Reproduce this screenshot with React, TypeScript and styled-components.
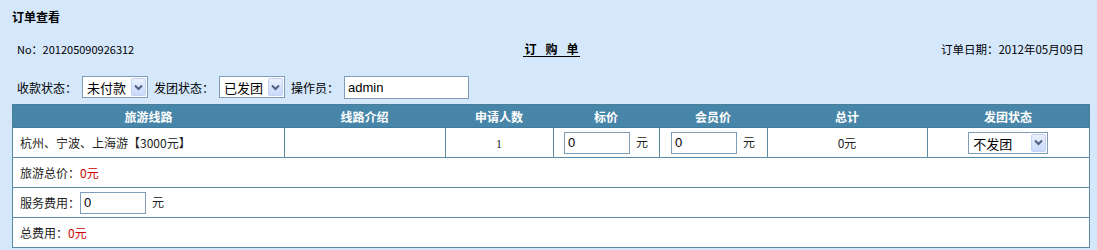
import React from "react";
import styled, { createGlobalStyle } from "styled-components";

const Global = createGlobalStyle`
  html, body {
    margin: 0;
    padding: 0;
    background: #d4e7fb;
  }
  body {
    font-family: "Noto Sans CJK SC", "Liberation Sans", sans-serif;
    font-size: 12px;
    color: #000;
  }
`;

const Page = styled.div`
  width: 1097px;
  height: 250px;
  overflow: hidden;
  padding: 8px 10px 0 12px;
  box-sizing: border-box;
`;

const Title = styled.div`
  font-weight: bold;
  font-size: 12px;
  line-height: 18px;
  height: 18px;
`;

const InfoRow = styled.div`
  display: grid;
  grid-template-columns: 1fr auto 1fr;
  align-items: center;
  height: 18px;
  margin-top: 14px;
  padding: 0 3px 0 5px;
`;

const OrderNo = styled.span`
  font-size: 11px;
`;

const OrderTitle = styled.span`
  display: inline-flex;
  gap: 9px;
  font-weight: bold;
  font-size: 12px;
  line-height: 15px;
  border-bottom: 1px solid #000;
  padding: 0 1px;
  margin-left: 2px;
`;

const OrderDate = styled.span`
  justify-self: end;
  font-size: 11.5px;
`;

const FilterRow = styled.div`
  display: flex;
  align-items: center;
  height: 24px;
  margin-top: 17px;
  padding-left: 5px;
`;

const Label = styled.span<{ $gap?: number }>`
  margin-left: ${(p) => p.$gap ?? 0}px;
  margin-right: 5px;
  white-space: nowrap;
`;

const SelectWrap = styled.span<{ $w: number }>`
  display: inline-flex;
  align-items: center;
  width: ${(p) => p.$w}px;
  height: 22px;
  box-sizing: border-box;
  border: 1px solid #7f9db9;
  background: #fff;
  padding: 1px;
`;

const NativeSelect = styled.select`
  appearance: none;
  -webkit-appearance: none;
  border: none;
  outline: none;
  background: transparent;
  flex: 1;
  min-width: 0;
  height: 100%;
  padding: 0 0 0 3px;
  font-family: "Noto Sans CJK SC", sans-serif;
  font-size: 13px;
  color: #000;
`;

const Arrow = styled.span`
  display: flex;
  align-items: center;
  justify-content: center;
  width: 15px;
  height: 18px;
  box-sizing: border-box;
  border: 1px solid #c3d3f3;
  border-radius: 2px;
  background: linear-gradient(#eaf0fd, #c9d9fb);
`;

const TextInput = styled.input<{ $w: number }>`
  width: ${(p) => p.$w}px;
  height: 22px;
  box-sizing: border-box;
  border: 1px solid #7f9db9;
  padding: 0 3px;
  font-family: "Liberation Sans", sans-serif;
  font-size: 13px;
  color: #000;
  background: #fff;
  outline: none;
`;

const Table = styled.table`
  width: 1076px;
  margin-top: 5px;
  border-collapse: collapse;
  table-layout: fixed;
  background: #fff;
  border: 1px solid #4a7f9c;
`;

const Th = styled.th<{ $w: number }>`
  width: ${(p) => p.$w}px;
  height: 22px;
  padding: 0;
  background: #4886a9;
  color: #fff;
  font-weight: bold;
  font-size: 12px;
  text-align: center;
  border: none;
`;

const Td = styled.td<{ $align?: string }>`
  height: 29px;
  padding: 0 7px;
  border: 1px solid #5d8aa5;
  border-top-color: #3f7aa0;
  text-align: ${(p) => p.$align ?? "center"};
  white-space: nowrap;
  vertical-align: middle;
  color: #222;
`;

const Red = styled.span`
  color: #c00;
`;

const Unit = styled.span`
  margin-left: 6px;
`;

const Digit = styled.span`
  font-family: "Liberation Serif", serif;
  font-size: 12px;
`;

const Chevron = () => (
  <svg width="9" height="7" viewBox="0 0 9 7">
    <path d="M1 1.5 L4.5 5 L8 1.5" fill="none" stroke="#4d6185" strokeWidth="2" />
  </svg>
);

const Select = ({ w, value }: { w: number; value: string }) => (
  <SelectWrap $w={w}>
    <NativeSelect defaultValue={value}>
      <option>{value}</option>
    </NativeSelect>
    <Arrow>
      <Chevron />
    </Arrow>
  </SelectWrap>
);

const cols = [
  { name: "旅游线路", w: 271 },
  { name: "线路介绍", w: 161 },
  { name: "申请人数", w: 108 },
  { name: "标价", w: 106 },
  { name: "会员价", w: 108 },
  { name: "总计", w: 160 },
  { name: "发团状态", w: 162 },
];

export default function App() {
  return (
    <Page>
      <Global />
      <Title>订单查看</Title>
      <InfoRow>
        <OrderNo>No：201205090926312</OrderNo>
        <OrderTitle>
          <span>订</span>
          <span>购</span>
          <span>单</span>
        </OrderTitle>
        <OrderDate>订单日期：2012年05月09日</OrderDate>
      </InfoRow>
      <FilterRow>
        <Label>收款状态：</Label>
        <Select w={66} value="未付款" />
        <Label $gap={6}>发团状态：</Label>
        <Select w={66} value="已发团" />
        <Label $gap={6}>操作员：</Label>
        <TextInput $w={125} defaultValue="admin" style={{ height: 23 }} />
      </FilterRow>
      <Table>
        <thead>
          <tr>
            {cols.map((c) => (
              <Th key={c.name} $w={c.w}>
                {c.name}
              </Th>
            ))}
          </tr>
        </thead>
        <tbody>
          <tr>
            <Td $align="left">杭州、宁波、上海游【3000元】</Td>
            <Td />
            <Td>
              <Digit>1</Digit>
            </Td>
            <Td>
              <TextInput $w={66} defaultValue="0" />
              <Unit>元</Unit>
            </Td>
            <Td>
              <TextInput $w={66} defaultValue="0" />
              <Unit>元</Unit>
            </Td>
            <Td>0元</Td>
            <Td>
              <Select w={80} value="不发团" />
            </Td>
          </tr>
          <tr>
            <Td $align="left" colSpan={7}>
              旅游总价：<Red>0元</Red>
            </Td>
          </tr>
          <tr>
            <Td $align="left" colSpan={7}>
              服务费用：<TextInput $w={66} defaultValue="0" />
              <Unit>元</Unit>
            </Td>
          </tr>
          <tr>
            <Td $align="left" colSpan={7}>
              总费用：<Red>0元</Red>
            </Td>
          </tr>
        </tbody>
      </Table>
    </Page>
  );
}
